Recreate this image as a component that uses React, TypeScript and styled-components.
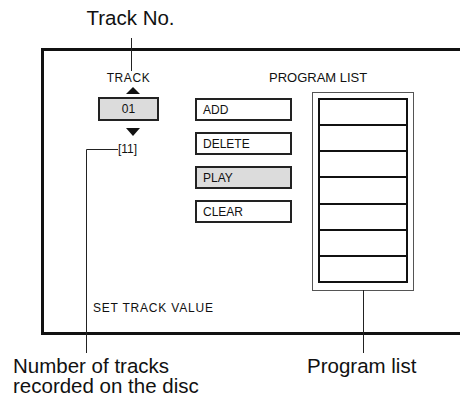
import React from "react";
import styled, { createGlobalStyle } from "styled-components";

const GlobalStyle = createGlobalStyle`
  html, body {
    margin: 0;
    padding: 0;
    background: #ffffff;
  }
  body {
    font-family: "Liberation Sans", Arial, Helvetica, sans-serif;
    color: #111111;
  }
`;

const Page = styled.div`
  position: relative;
  width: 460px;
  height: 400px;
  overflow: hidden;
  background: #ffffff;
`;

const Header = styled.div`
  height: 48px;
  box-sizing: border-box;
  padding-top: 6px;
`;

const Caption = styled.div<{ $width?: number }>`
  width: ${(p) => (p.$width ? `${p.$width}px` : "auto")};
  font-size: 20.5px;
  line-height: 20px;
  height: 20px;
  color: #111;
  white-space: nowrap;
  text-align: ${(p) => (p.$width ? "center" : "left")};
`;

const HeaderCaption = styled(Caption)`
  line-height: 24px;
  height: 24px;
`;

const Frame = styled.div`
  margin-left: 41px;
  width: 440px;
  height: 287px;
  box-sizing: border-box;
  border: 3px solid #111;
  border-right: none;
  display: flex;
  flex-direction: column;
  padding: 19px 0 16px 54px;
`;

const Main = styled.div`
  display: flex;
  gap: 36px;
`;

const TrackColumn = styled.div`
  width: 61px;
  display: flex;
  flex-direction: column;
  align-items: center;
`;

const SmallLabel = styled.div<{ $spacing?: number }>`
  font-size: 12px;
  line-height: 16px;
  height: 16px;
  letter-spacing: ${(p) => p.$spacing ?? 0}px;
  white-space: nowrap;
`;

const Arrow = styled.div<{ $dir: "up" | "down"; $mt: number }>`
  width: 0;
  height: 0;
  margin-top: ${(p) => p.$mt}px;
  margin-left: 9px;
  border-left: 7px solid transparent;
  border-right: 7px solid transparent;
  ${(p) =>
    p.$dir === "up"
      ? "border-bottom: 7px solid #111;"
      : "border-top: 8px solid #111;"}
`;

const TrackBox = styled.div`
  margin-top: 3px;
  width: 61px;
  height: 24px;
  box-sizing: border-box;
  border: 2px solid #222;
  background: #dcdcdc;
  display: flex;
  align-items: center;
  justify-content: center;
  font-size: 12px;
`;

const TrackCount = styled.div`
  margin-top: 6px;
  font-size: 12px;
  line-height: 14px;
  margin-left: -2px;
`;

const RightSection = styled.div`
  display: flex;
  flex-direction: column;
`;

const ListTitle = styled.div`
  padding-left: 74px;
  font-size: 13px;
  line-height: 16px;
  height: 16px;
  white-space: nowrap;
`;

const ControlRow = styled.div`
  margin-top: 6px;
  display: flex;
  gap: 20px;
  align-items: flex-start;
`;

const ButtonColumn = styled.div`
  margin-top: 6px;
  display: flex;
  flex-direction: column;
  gap: 11px;
`;

const Button = styled.div<{ $active?: boolean }>`
  width: 97px;
  height: 23px;
  box-sizing: border-box;
  border: 2px solid #222;
  background: ${(p) => (p.$active ? "#dcdcdc" : "#ffffff")};
  display: flex;
  align-items: center;
  padding-left: 6px;
  font-size: 12px;
`;

const ListOuter = styled.div`
  width: 102px;
  height: 199px;
  box-sizing: border-box;
  border: 1px solid #555;
  padding: 5px 5px 7px 5px;
`;

const ListInner = styled.div`
  height: 100%;
  box-sizing: border-box;
  border: 2px solid #111;
  display: flex;
  flex-direction: column;
`;

const ListRow = styled.div`
  flex: 1;
  & + & {
    border-top: 2px solid #111;
  }
`;

const FrameFooter = styled.div`
  margin-top: auto;
  margin-left: -5px;
`;

const Footer = styled.div`
  margin-top: 21px;
  display: flex;
  padding-left: 13px;
`;

const FooterLeft = styled.div`
  width: 294px;
  display: flex;
  flex-direction: column;
`;

const Leaders = styled.svg`
  position: absolute;
  left: 0;
  top: 0;
  pointer-events: none;
`;

const buttons = [
  { label: "ADD" },
  { label: "DELETE" },
  { label: "PLAY", active: true },
  { label: "CLEAR" },
];

export default function App() {
  return (
    <>
      <GlobalStyle />
      <Page>
        <Header>
          <HeaderCaption $width={261}>Track No.</HeaderCaption>
        </Header>
        <Frame>
          <Main>
            <TrackColumn>
              <SmallLabel $spacing={0.6}>TRACK</SmallLabel>
              <Arrow $dir="up" $mt={1} />
              <TrackBox>01</TrackBox>
              <Arrow $dir="down" $mt={7} />
              <TrackCount>[11]</TrackCount>
            </TrackColumn>
            <RightSection>
              <ListTitle>PROGRAM LIST</ListTitle>
              <ControlRow>
                <ButtonColumn>
                  {buttons.map((b) => (
                    <Button key={b.label} $active={b.active}>
                      {b.label}
                    </Button>
                  ))}
                </ButtonColumn>
                <ListOuter>
                  <ListInner>
                    {Array.from({ length: 7 }).map((_, i) => (
                      <ListRow key={i} />
                    ))}
                  </ListInner>
                </ListOuter>
              </ControlRow>
            </RightSection>
          </Main>
          <FrameFooter>
            <SmallLabel $spacing={0.8}>SET TRACK VALUE</SmallLabel>
          </FrameFooter>
        </Frame>
        <Footer>
          <FooterLeft>
            <Caption>Number of tracks</Caption>
            <Caption>recorded on the disc</Caption>
          </FooterLeft>
          <Caption>Program list</Caption>
        </Footer>
        <Leaders width={460} height={400} viewBox="0 0 460 400">
          <g stroke="#222" strokeWidth={1} fill="none">
            <line x1={131.5} y1={38} x2={131.5} y2={71} />
            <polyline points="118,149.5 86.5,149.5 86.5,353" />
            <line x1={363.5} y1={290} x2={363.5} y2={353} />
          </g>
        </Leaders>
      </Page>
    </>
  );
}
